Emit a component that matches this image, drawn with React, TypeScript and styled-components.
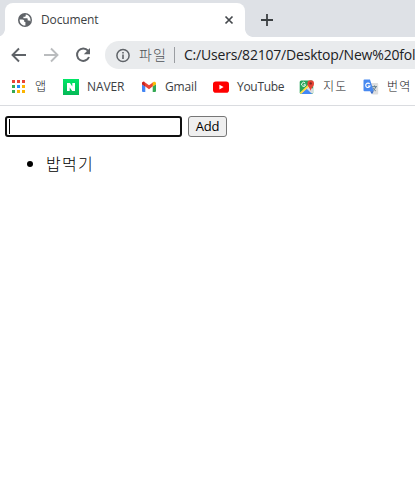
import React from 'react';
import styled, { createGlobalStyle } from 'styled-components';

const GlobalStyle = createGlobalStyle`
  * { box-sizing: border-box; }
  html, body, #root { height: 100%; }
  body {
    margin: 0;
    overflow: hidden;
    background: #fff;
    font-family: "Open Sans", "Noto Sans CJK KR", sans-serif;
  }
  svg { display: block; flex: none; }
`;

const Window = styled.div`
  display: flex;
  flex-direction: column;
  height: 100vh;
  overflow: hidden;
`;

const TabStrip = styled.div`
  display: flex;
  height: 37px;
  padding: 3px 0 0 5px;
  background: #dee1e6;
`;

const Tab = styled.div`
  position: relative;
  display: flex;
  align-items: center;
  width: 240px;
  height: 34px;
  padding: 0 10px 0 12px;
  background: #fff;
  border-radius: 8px 8px 0 0;

  &::before, &::after {
    content: '';
    position: absolute;
    bottom: 0;
    width: 8px;
    height: 8px;
  }
  &::before {
    left: -8px;
    background: radial-gradient(circle at 0 0, #dee1e6 7.5px, #fff 8.2px);
  }
  &::after {
    right: -8px;
    background: radial-gradient(circle at 100% 0, #dee1e6 7.5px, #fff 8.2px);
  }
`;

const Label = styled.span<{ $size?: number; $color?: string; $spacing?: number; $weight?: number }>`
  flex: none;
  font-size: ${p => p.$size ?? 12}px;
  font-weight: ${p => p.$weight ?? 400};
  line-height: 18px;
  letter-spacing: ${p => p.$spacing ?? 0}px;
  color: ${p => p.$color ?? '#3c4043'};
  white-space: nowrap;
`;

const TabTitle = styled(Label)`
  flex: 1;
  margin-left: 8px;
`;

const NewTab = styled.div`
  margin: 10px 0 0 15px;
`;

const Toolbar = styled.div`
  display: flex;
  align-items: center;
  height: 36px;
  padding: 0 0 0 11px;
`;

const NavIcons = styled.div`
  display: flex;
  gap: 16px;
  width: 94px;
`;

const AddressBar = styled.div`
  display: flex;
  align-items: center;
  flex: 1;
  min-width: 0;
  height: 28px;
  padding-left: 11px;
  overflow: hidden;
  background: #e9ebed;
  border-radius: 14px 0 0 14px;
`;

const Scheme = styled(Label)`
  width: 35px;
  margin-left: 8px;
`;

const Divider = styled.span`
  flex: none;
  width: 1px;
  height: 16px;
  margin-right: 9px;
  background: #9a9da1;
`;

const Bookmarks = styled.div`
  display: flex;
  align-items: center;
  height: 33px;
  padding: 0 0 4px 11px;
  border-bottom: 1px solid #dadce0;
`;

const Bookmark = styled.div<{ $width: number }>`
  display: flex;
  align-items: center;
  flex: none;
  gap: 8px;
  width: ${p => p.$width}px;
`;

const Page = styled.main`
  padding: 10px 5px;
`;

const Form = styled.div`
  display: flex;
  gap: 6px;
`;

const Field = styled.div`
  display: flex;
  align-items: center;
  width: 177px;
  height: 21px;
  padding-left: 2px;
  border: 2px solid #101010;
  border-radius: 3px;
`;

const Caret = styled.span`
  width: 1px;
  height: 15px;
  background: #000;
`;

const AddButton = styled.button`
  width: 39px;
  height: 21px;
  padding: 0;
  font: 13px/17px "Open Sans", sans-serif;
  letter-spacing: -0.25px;
  color: #000;
  background: #efefef;
  border: 1px solid #767676;
  border-radius: 3px;
`;

const List = styled.ul`
  margin: 15px 0;
  padding-left: 41px;
  font-family: "Noto Sans CJK KR", sans-serif;
  font-size: 16px;
  font-weight: 300;
  line-height: 22px;
  letter-spacing: 1.3px;
  color: #000;
`;

const GlobeIcon = () => (
  <svg width="16" height="16" viewBox="0 0 16 16">
    <circle cx="8" cy="8" r="7" fill="#5f6368" />
    <path d="M2.600 7.600h2.700c1.300 0 2 .8 2 1.800v.6h1.100v3.600C5 13.900 2.600 11.200 2.600 7.600Z" fill="#fff" />
    <path d="M8.700 2.600v1.100c0 .7-.5 1.100-1.200 1.100H6.400v1.400h3.300c.8 0 1 .5 1 1.200v1h1.100c.8 0 1.100.5 1.500 1.200C14.200 6.200 12 3 8.700 2.600Z" fill="#fff" />
  </svg>
);

const CloseIcon = () => (
  <svg width="12" height="12" viewBox="0 0 12 12">
    <path d="M2.500 2.500l7 7m0-7l-7 7" stroke="#45494d" strokeWidth="1.700" />
  </svg>
);

const PlusIcon = () => (
  <svg width="14" height="14" viewBox="0 0 14 14">
    <path d="M7 1v12M1 7h12" stroke="#3c4043" strokeWidth="1.800" />
  </svg>
);

const ArrowIcon = ({ forward = false }: { forward?: boolean }) => (
  <svg width="16" height="16" viewBox="0 0 16 16">
    <path
      d={forward ? 'M1 8h13M8 1.500L14.500 8 8 14.500' : 'M15 8H2M8 1.500L1.500 8 8 14.500'}
      fill="none"
      stroke={forward ? '#babcbe' : '#5f6368'}
      strokeWidth="1.900"
    />
  </svg>
);

const ReloadIcon = () => (
  <svg width="16" height="16" viewBox="0 0 16 16">
    <path d="M13 3.700A6.200 6.200 0 1 0 14 10" fill="none" stroke="#5f6368" strokeWidth="2" />
    <path d="M15 1v6.200H8.800Z" fill="#5f6368" />
  </svg>
);

const InfoIcon = () => (
  <svg width="15" height="15" viewBox="0 0 15 15">
    <circle cx="7" cy="7.500" r="6.100" fill="none" stroke="#5f6368" strokeWidth="1.500" />
    <path d="M7 6.500v4.500M7 4v1.500" stroke="#5f6368" strokeWidth="1.600" />
  </svg>
);

const appColors = ['#ea4335', '#ea4335', '#ea4335', '#34a853', '#1a8cff', '#fbb400', '#34a853', '#fbb400', '#fbb400'];

const AppsIcon = () => (
  <svg width="16" height="16" viewBox="0 0 16 16">
    {appColors.map((color, i) => (
      <rect key={i} x={1 + (i % 3) * 5} y={1 + Math.floor(i / 3) * 5} width="3" height="3" fill={color} />
    ))}
  </svg>
);

const NaverIcon = () => (
  <svg width="16" height="16" viewBox="0 0 16 16">
    <defs>
      <linearGradient id="naver" x2="0" y2="1">
        <stop stopColor="#00e766" />
        <stop offset="1" stopColor="#05b857" />
      </linearGradient>
    </defs>
    <path fill="url(#naver)" d="M0 0h16v16H0Z" />
    <path d="M4 4h3l2.300 3.500V4H12v8H9.200L6.700 8.400V12H4Z" fill="#fff" />
  </svg>
);

const GmailIcon = () => (
  <svg width="16" height="16" viewBox="0 0 16 16">
    <path d="M1 5l3.300 2.400V13H2a1 1 0 0 1-1-1Z" fill="#4285f4" />
    <path d="M15 5l-3.300 2.400V13H14a1 1 0 0 0 1-1Z" fill="#34a853" />
    <path d="M1 4.500C1 3 2.700 2.400 3.800 3.200L8 6.300l4.200-3.100V7L8 10.200 4 7.200 1 5.200Z" fill="#ea4335" />
    <path d="M11.700 3.600l.7-.5C13.500 2.400 15 3 15 4.500v.8l-3.300 2.300Z" fill="#fbbc04" />
    <path d="M1 4.500c0-1.200 1.100-1.900 2.100-1.700L4.300 7.600 1 5.200Z" fill="#c5221f" />
  </svg>
);

const YouTubeIcon = () => (
  <svg width="16" height="16" viewBox="0 0 16 16">
    <rect y="2.500" width="16" height="11.200" rx="2.800" fill="#f00" />
    <path d="M6.400 5.700v4.800L10.600 8.100Z" fill="#fff" />
  </svg>
);

const MapsIcon = () => (
  <svg width="16" height="16" viewBox="0 0 16 16">
    <rect x=".7" y="1.500" width="13.500" height="13.500" rx="1.500" fill="#25a55a" />
    <path d="M1 14.500L10.500 6l3.700 4v4.500Z" fill="#d8dce0" />
    <path d="M2 15l5.700-5.200L13 15Z" fill="#4387f5" />
    <path d="M.8 13.700L9.500 5.300l1.500 1.500L2 15Z" fill="#ffdc45" />
    <path d="M6.200 4.100a2 2 0 1 0 .4 1.700H4.700" fill="none" stroke="#fff" strokeWidth="1" />
    <path d="M11.600 12c-.3-3-3.200-4.200-3.200-7.500a3.300 3.300 0 0 1 6.600 0c0 3.300-3.100 4.500-3.400 7.500Z" fill="#e54335" />
    <circle cx="11.700" cy="4.400" r="1.200" fill="#7e2520" />
  </svg>
);

const TranslateIcon = () => (
  <svg width="16" height="16" viewBox="0 0 16 16">
    <path d="M6 4h8.200a1 1 0 0 1 1 1v9.500a1 1 0 0 1-1 1H9.500Z" fill="#dedede" />
    <path d="M9 7.700h5M11.500 6.500v1.200m1.300 0c-.6 2-1.800 3.300-3.200 4.300m.2-3.200c.7 1.300 1.700 2.400 3 3.100" fill="none" stroke="#607d8b" />
    <path d="M1.500.5H7l3.700 11.700H1.500a1 1 0 0 1-1-1V1.500a1 1 0 0 1 1-1Z" fill="#4889f0" />
    <path d="M7 12.200h3.700L9 15.200Z" fill="#3267c9" />
    <path d="M6.700 5a2.200 2.200 0 1 0 .3 2H4.900" fill="none" stroke="#fff" strokeWidth="1.100" />
  </svg>
);

const bookmarks = [
  { label: '앱', Icon: AppsIcon, width: 52, spacing: 0, weight: 300, color: '#202124' },
  { label: 'NAVER', Icon: NaverIcon, width: 78, spacing: -0.1, weight: 400 },
  { label: 'Gmail', Icon: GmailIcon, width: 72, spacing: -0.15, weight: 400 },
  { label: 'YouTube', Icon: YouTubeIcon, width: 86, spacing: -0.3, weight: 400 },
  { label: '지도', Icon: MapsIcon, width: 64, spacing: 1.2, weight: 300, color: '#202124' },
  { label: '번역', Icon: TranslateIcon, width: 60, spacing: 1.2, weight: 300, color: '#202124' },
];

export default function App() {
  return (
    <Window>
      <GlobalStyle />
      <TabStrip>
        <Tab>
          <GlobeIcon />
          <TabTitle $spacing={-0.15}>Document</TabTitle>
          <CloseIcon />
        </Tab>
        <NewTab><PlusIcon /></NewTab>
      </TabStrip>
      <Toolbar>
        <NavIcons>
          <ArrowIcon />
          <ArrowIcon forward />
          <ReloadIcon />
        </NavIcons>
        <AddressBar>
          <InfoIcon />
          <Scheme $size={14} $color="#4f5358" $spacing={1.2} $weight={300}>파일</Scheme>
          <Divider />
          <Label $size={14} $color="#202124" $spacing={-0.2}>C:/Users/82107/Desktop/New%20fol</Label>
        </AddressBar>
      </Toolbar>
      <Bookmarks>
        {bookmarks.map(({ label, Icon, width, spacing, weight, color }) => (
          <Bookmark key={label} $width={width}>
            <Icon />
            <Label $spacing={spacing} $weight={weight} $color={color}>{label}</Label>
          </Bookmark>
        ))}
      </Bookmarks>
      <Page>
        <Form>
          <Field><Caret /></Field>
          <AddButton>Add</AddButton>
        </Form>
        <List><li>밥먹기</li></List>
      </Page>
    </Window>
  );
}
